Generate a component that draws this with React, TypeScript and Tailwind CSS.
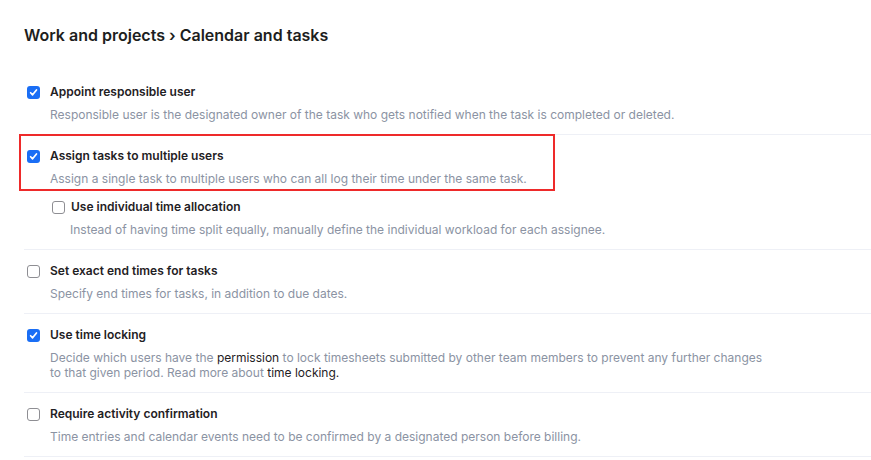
import React from "react";

function Box({ checked }: { checked: boolean }) {
  if (checked) {
    return (
      <span className="flex h-[13px] w-[13px] shrink-0 items-center justify-center rounded-[3px] bg-[#1a6ef5]">
        <svg width="9" height="9" viewBox="0 0 10 10" fill="none">
          <path d="M1.8 5.3 L4 7.6 L8.3 2.2" stroke="white" strokeWidth="1.9" strokeLinecap="round" strokeLinejoin="round" />
        </svg>
      </span>
    );
  }
  return <span className="block h-[13px] w-[13px] shrink-0 rounded-[3px] border border-[#8e8e93] bg-white" />;
}

function Option({
  checked,
  title,
  children,
  sub,
}: {
  checked: boolean;
  title: string;
  children: React.ReactNode;
  sub?: boolean;
}) {
  return (
    <div className={sub ? "pl-[27px] pt-[11px]" : "pt-[11px]"}>
      <div className={sub ? "flex h-[20px] items-center gap-[6px] pl-[1px]" : "flex h-[20px] items-center gap-[10px] pl-[3px]"}>
        <Box checked={checked} />
        <span className="text-[12px] font-semibold text-[#1f2124]">{title}</span>
      </div>
      <div className={sub ? "mt-[5px] pl-[19px] text-[12px] leading-[15px] text-[#8b93a3]" : "mt-[5px] max-w-[746px] pl-[26px] text-[12px] leading-[15px] text-[#8b93a3]"}>
        {children}
      </div>
    </div>
  );
}

export default function App() {
  return (
    <div className="relative h-[460px] w-[871px] overflow-hidden bg-white font-['Inter',sans-serif]">
      <div className="pl-6 pt-[24px]">
        <h1 className="h-[22px] text-[16px] font-semibold leading-[22px] text-[#1d1e20]">
          Work and projects › Calendar and tasks
        </h1>
        <div className="mt-[25px]">
          <div className="border-b border-[#eef0f6] pb-[12px]">
            <Option checked title="Appoint responsible user">
              Responsible user is the designated owner of the task who gets notified when the task is completed or deleted.
            </Option>
          </div>
          <div className="relative border-b border-[#eef0f6] pb-[12px]">
            <Option checked title="Assign tasks to multiple users">
              Assign a single task to multiple users who can all log their time under the same task.
            </Option>
            <Option sub checked={false} title="Use individual time allocation">
              Instead of having time split equally, manually define the individual workload for each assignee.
            </Option>
            <div className="pointer-events-none absolute left-[-5px] top-[-1px] h-[57px] w-[536px] border-2 border-[#ee2a2a]" />
          </div>
          <div className="border-b border-[#eef0f6] pb-[12px]">
            <Option checked={false} title="Set exact end times for tasks">
              Specify end times for tasks, in addition to due dates.
            </Option>
          </div>
          <div className="border-b border-[#eef0f6] pb-[12px]">
            <Option checked title="Use time locking">
              Decide which users have the <span className="text-[#1f2124]">permission</span> to lock timesheets submitted by other team members to prevent any further changes to that given period. Read more about <span className="text-[#1f2124]">time locking.</span>
            </Option>
          </div>
          <div className="border-b border-[#eef0f6] pb-[12px]">
            <Option checked={false} title="Require activity confirmation">
              Time entries and calendar events need to be confirmed by a designated person before billing.
            </Option>
          </div>
        </div>
      </div>
    </div>
  );
}
